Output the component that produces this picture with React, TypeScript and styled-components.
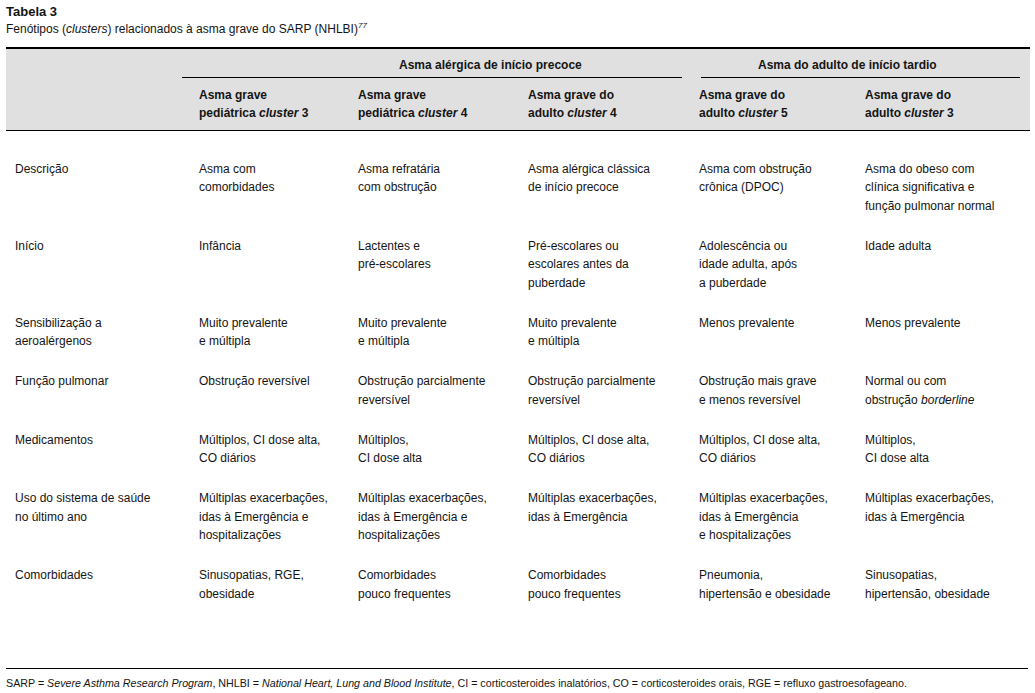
import React from "react";
import styled, { createGlobalStyle } from "styled-components";

const GlobalStyle = createGlobalStyle`
  html, body {
    margin: 0;
    padding: 0;
    background: #ffffff;
  }
  body {
    font-family: "Liberation Sans", Arial, Helvetica, sans-serif;
    color: #141414;
  }
`;

const Page = styled.div`
  width: 1035px;
  height: 693px;
  padding: 4px 5px 0 6px;
  box-sizing: border-box;
  display: flex;
  flex-direction: column;
`;

const Title = styled.div`
  font-size: 13px;
  font-weight: bold;
  line-height: 15px;
`;

const Subtitle = styled.div`
  font-size: 12px;
  line-height: 16px;
  margin-top: 2px;
  sup {
    font-size: 8px;
    font-style: italic;
    vertical-align: 5px;
    line-height: 0;
  }
`;

const COLS = "176px 159px 170px 171px 166px 1fr";

const Header = styled.div`
  margin-top: 10px;
  background: #e0e0e0;
  border-top: 2px solid #000;
  border-bottom: 1.5px solid #000;
  display: grid;
  grid-template-columns: ${COLS};
  padding-top: 7px;
  padding-bottom: 7px;
`;

const GroupTitle = styled.div<{ $col: string; $offset: number; $mr: number; $ml: number }>`
  grid-column: ${(p) => p.$col};
  grid-row: 1;
  font-size: 12px;
  font-weight: bold;
  line-height: 18px;
  padding-left: ${(p) => p.$offset}px;
  padding-bottom: 3px;
  margin-left: ${(p) => p.$ml}px;
  margin-right: ${(p) => p.$mr}px;
  border-bottom: 1.5px solid #000;
  white-space: nowrap;
`;

const SubHead = styled.div`
  grid-row: 2;
  font-size: 12px;
  font-weight: bold;
  line-height: 18.5px;
  padding-left: 17px;
  padding-top: 7.5px;
  white-space: nowrap;
`;

const Body = styled.div`
  display: grid;
  grid-template-columns: ${COLS};
  padding-top: 29px;
`;

const Cell = styled.div<{ $label?: boolean }>`
  font-size: 12px;
  line-height: 18.5px;
  padding-left: ${(p) => (p.$label ? 9 : 17)}px;
  padding-bottom: 21.5px;
  white-space: nowrap;
`;

const Spacer = styled.div`
  flex: 1;
`;

const Footer = styled.div`
  border-top: 1.5px solid #000;
  margin-right: 2px;
  padding-top: 8px;
  margin-bottom: 3px;
  font-size: 10.7px;
  line-height: 13px;
  white-space: nowrap;
`;

type Line = React.ReactNode;
type Row = { label: Line[]; cells: Line[][] };

const I = styled.i`
  font-style: italic;
`;

const rows: Row[] = [
  {
    label: ["Descrição"],
    cells: [
      ["Asma com", "comorbidades"],
      ["Asma refratária", "com obstrução"],
      ["Asma alérgica clássica", "de início precoce"],
      ["Asma com obstrução", "crônica (DPOC)"],
      ["Asma do obeso com", "clínica significativa e", "função pulmonar normal"],
    ],
  },
  {
    label: ["Início"],
    cells: [
      ["Infância"],
      ["Lactentes e", "pré-escolares"],
      ["Pré-escolares ou", "escolares antes da", "puberdade"],
      ["Adolescência ou", "idade adulta, após", "a puberdade"],
      ["Idade adulta"],
    ],
  },
  {
    label: ["Sensibilização a", "aeroalérgenos"],
    cells: [
      ["Muito prevalente", "e múltipla"],
      ["Muito prevalente", "e múltipla"],
      ["Muito prevalente", "e múltipla"],
      ["Menos prevalente"],
      ["Menos prevalente"],
    ],
  },
  {
    label: ["Função pulmonar"],
    cells: [
      ["Obstrução reversível"],
      ["Obstrução parcialmente", "reversível"],
      ["Obstrução parcialmente", "reversível"],
      ["Obstrução mais grave", "e menos reversível"],
      ["Normal ou com", <>obstrução <I>borderline</I></>],
    ],
  },
  {
    label: ["Medicamentos"],
    cells: [
      ["Múltiplos, CI dose alta,", "CO diários"],
      ["Múltiplos,", "CI dose alta"],
      ["Múltiplos, CI dose alta,", "CO diários"],
      ["Múltiplos, CI dose alta,", "CO diários"],
      ["Múltiplos,", "CI dose alta"],
    ],
  },
  {
    label: ["Uso do sistema de saúde", "no último ano"],
    cells: [
      ["Múltiplas exacerbações,", "idas à Emergência e", "hospitalizações"],
      ["Múltiplas exacerbações,", "idas à Emergência e", "hospitalizações"],
      ["Múltiplas exacerbações,", "idas à Emergência"],
      ["Múltiplas exacerbações,", "idas à Emergência", "e hospitalizações"],
      ["Múltiplas exacerbações,", "idas à Emergência"],
    ],
  },
  {
    label: ["Comorbidades"],
    cells: [
      ["Sinusopatias, RGE,", "obesidade"],
      ["Comorbidades", "pouco frequentes"],
      ["Comorbidades", "pouco frequentes"],
      ["Pneumonia,", "hipertensão e obesidade"],
      ["Sinusopatias,", "hipertensão, obesidade"],
    ],
  },
];

const Lines = ({ lines }: { lines: Line[] }) => (
  <>
    {lines.map((l, i) => (
      <React.Fragment key={i}>
        {i > 0 && <br />}
        {l}
      </React.Fragment>
    ))}
  </>
);

const subHeads: Line[][] = [
  ["Asma grave", <>pediátrica <I>cluster</I> 3</>],
  ["Asma grave", <>pediátrica <I>cluster</I> 4</>],
  ["Asma grave do", <>adulto <I>cluster</I> 4</>],
  ["Asma grave do", <>adulto <I>cluster</I> 5</>],
  ["Asma grave do", <>adulto <I>cluster</I> 3</>],
];

export default function App() {
  return (
    <>
      <GlobalStyle />
      <Page>
        <Title>Tabela 3</Title>
        <Subtitle>
          Fenótipos (<I>clusters</I>) relacionados à asma grave do SARP (NHLBI)<sup>77</sup>
        </Subtitle>
        <Header>
          <GroupTitle $col="2 / 5" $offset={217} $ml={0} $mr={0}>
            Asma alérgica de início precoce
          </GroupTitle>
          <GroupTitle $col="5 / 7" $offset={57} $ml={19} $mr={10}>
            Asma do adulto de início tardio
          </GroupTitle>
          <SubHead />
          {subHeads.map((s, i) => (
            <SubHead key={i}>
              <Lines lines={s} />
            </SubHead>
          ))}
        </Header>
        <Body>
          {rows.map((r, ri) => (
            <React.Fragment key={ri}>
              <Cell $label>
                <Lines lines={r.label} />
              </Cell>
              {r.cells.map((c, ci) => (
                <Cell key={ci}>
                  <Lines lines={c} />
                </Cell>
              ))}
            </React.Fragment>
          ))}
        </Body>
        <Spacer />
        <Footer>
          SARP = <I>Severe Asthma Research Program</I>, NHLBI = <I>National Heart, Lung and Blood Institute</I>, CI =
          corticosteroides inalatórios, CO = corticosteroides orais, RGE = refluxo gastroesofageano.
        </Footer>
      </Page>
    </>
  );
}
